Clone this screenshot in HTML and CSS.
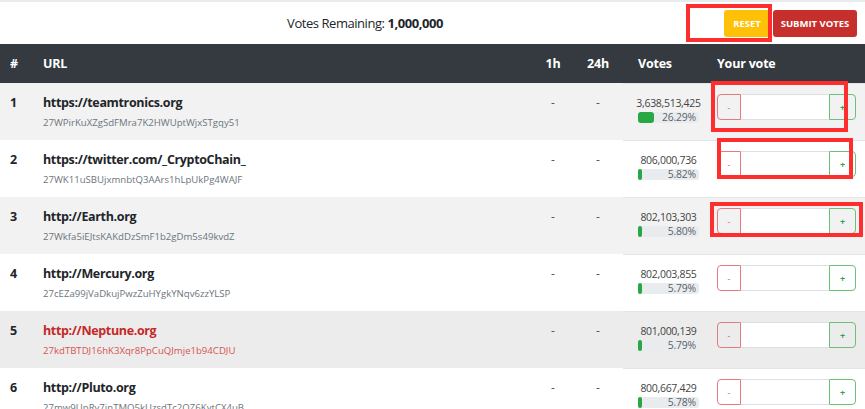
FILE: index.html
```html
<!DOCTYPE html>
<html>
<head>
<meta charset="utf-8">
<link rel="stylesheet" href="styles.css">
</head>
<body>
<div class="page">
  <div class="topline"></div>
  <div class="toolbar">
    <div class="remaining">Votes Remaining: <b>1,000,000</b></div>
    <div class="actions">
      <button class="btn btn-reset">RESET</button>
      <button class="btn btn-submit">SUBMIT VOTES</button>
    </div>
  </div>
  <div class="thead">
    <div class="c-num">#</div>
    <div class="c-url">URL</div>
    <div class="c-h">1h</div>
    <div class="c-d">24h</div>
    <div class="c-votes">Votes</div>
    <div class="c-yours">Your vote</div>
  </div>

  <div class="row alt">
    <div class="c-num">1</div>
    <div class="c-url"><div class="url">https://teamtronics.org</div><div class="addr">27WPirKuXZgSdFMra7K2HWUptWjxSTgqy51</div></div>
    <div class="c-h">-</div>
    <div class="c-d">-</div>
    <div class="c-votes sep"><div class="vnum">3,638,513,425</div><div class="bar"><div class="fill" style="width:26.29%"></div><span>26.29%</span></div></div>
    <div class="c-yours sep"><div class="vgroup"><span class="minus">-</span><span class="vinput"></span><span class="plus">+</span></div></div>
  </div>

  <div class="row">
    <div class="c-num">2</div>
    <div class="c-url"><div class="url">https://twitter.com/_CryptoChain_</div><div class="addr">27WK11uSBUjxmnbtQ3AArs1hLpUkPg4WAJF</div></div>
    <div class="c-h">-</div>
    <div class="c-d">-</div>
    <div class="c-votes sep"><div class="vnum">806,000,736</div><div class="bar"><div class="fill" style="width:5.82%"></div><span>5.82%</span></div></div>
    <div class="c-yours sep"><div class="vgroup"><span class="minus">-</span><span class="vinput"></span><span class="plus">+</span></div></div>
  </div>

  <div class="row alt">
    <div class="c-num">3</div>
    <div class="c-url"><div class="url">http://Earth.org</div><div class="addr">27Wkfa5iEJtsKAKdDzSmF1b2gDm5s49kvdZ</div></div>
    <div class="c-h">-</div>
    <div class="c-d">-</div>
    <div class="c-votes sep"><div class="vnum">802,103,303</div><div class="bar"><div class="fill" style="width:5.80%"></div><span>5.80%</span></div></div>
    <div class="c-yours sep"><div class="vgroup"><span class="minus">-</span><span class="vinput"></span><span class="plus">+</span></div></div>
  </div>

  <div class="row">
    <div class="c-num">4</div>
    <div class="c-url"><div class="url">http://Mercury.org</div><div class="addr">27cEZa99jVaDkujPwzZuHYgkYNqv6zzYLSP</div></div>
    <div class="c-h">-</div>
    <div class="c-d">-</div>
    <div class="c-votes sep"><div class="vnum">802,003,855</div><div class="bar"><div class="fill" style="width:5.79%"></div><span>5.79%</span></div></div>
    <div class="c-yours sep"><div class="vgroup"><span class="minus">-</span><span class="vinput"></span><span class="plus">+</span></div></div>
  </div>

  <div class="row hover">
    <div class="c-num">5</div>
    <div class="c-url"><div class="url">http://Neptune.org</div><div class="addr">27kdTBTDJ16hK3Xqr8PpCuQJmje1b94CDJU</div></div>
    <div class="c-h">-</div>
    <div class="c-d">-</div>
    <div class="c-votes sep"><div class="vnum">801,000,139</div><div class="bar"><div class="fill" style="width:5.79%"></div><span>5.79%</span></div></div>
    <div class="c-yours sep"><div class="vgroup"><span class="minus">-</span><span class="vinput"></span><span class="plus">+</span></div></div>
  </div>

  <div class="row">
    <div class="c-num">6</div>
    <div class="c-url"><div class="url">http://Pluto.org</div><div class="addr">27mw9UpRy7jnTMQ5kUzsdTc2QZ6KytCX4uB</div></div>
    <div class="c-h">-</div>
    <div class="c-d">-</div>
    <div class="c-votes sep"><div class="vnum">800,667,429</div><div class="bar"><div class="fill" style="width:5.78%"></div><span>5.78%</span></div></div>
    <div class="c-yours sep"><div class="vgroup"><span class="minus">-</span><span class="vinput"></span><span class="plus">+</span></div></div>
  </div>

  <div class="mark mark-0"></div>
  <div class="mark mark-1"></div>
  <div class="mark mark-2"></div>
  <div class="mark mark-3"></div>
</div>
</body>
</html>
```

FILE: styles.css
```css
html, body {
  margin: 0;
  padding: 0;
  background: #fff;
}
body {
  font-family: "Open Sans", "Noto Sans", sans-serif;
  color: #212529;
  overflow: hidden;
}
.page {
  position: relative;
  width: 865px;
  height: 409px;
  overflow: hidden;
}
.topline {
  height: 2px;
  background: #e9ecef;
}
.toolbar {
  height: 42px;
  display: flex;
  align-items: center;
}
.remaining {
  flex: 1;
  text-align: center;
  font-size: 13px;
  letter-spacing: -0.45px;
  color: #212529;
  padding-left: 6px;
}
.remaining b { font-weight: 700; }
.actions {
  display: flex;
  gap: 3px;
  padding-right: 8px;
  padding-top: 1px;
}
.btn {
  border: none;
  border-radius: 3px;
  color: #fff;
  font-family: inherit;
  font-weight: 700;
  font-size: 9.5px;
  height: 27px;
  padding: 0;
}
.btn-reset {
  background: #ffc107;
  width: 46px;
}
.btn-submit {
  background: #c62f2b;
  width: 84px;
}

.thead, .row {
  display: grid;
  grid-template-columns: 43px 1fr 40px 50px 94px 148px;
}
.thead {
  background: #343a40;
  color: #fff;
  font-weight: 700;
  font-size: 12.5px;
  letter-spacing: -0.2px;
  height: 39px;
  align-items: center;
}
.thead .c-h, .thead .c-d { text-align: center; }
.c-num { padding-left: 10px; }
.c-votes { padding-left: 15px; }
.c-yours { padding-right: 9px; }

.row {
  height: 57px;
  box-sizing: border-box;
  background: #fff;
}
.row.alt { background: #f2f2f2; }
.row.hover { background: #ececec; }
.row > div {
  padding-top: 11px;
  box-sizing: border-box;
}
.row .c-num {
  font-weight: 700;
  font-size: 12.5px;
  line-height: 18px;
}
.url {
  font-weight: 700;
  font-size: 12.5px;
  letter-spacing: -0.35px;
  line-height: 18px;
  color: #212529;
}
.addr {
  font-size: 9.6px;
  line-height: 14px;
  margin-top: 4px;
  color: #6c757d;
}
.row.hover .url { color: #c62828; }
.row.hover .addr { color: #d9534f; }
.row .c-h, .row .c-d {
  text-align: center;
  font-size: 12px;
  line-height: 18px;
  color: #555;
}
.sep { border-top: 1px solid #e4e4e4; }
.row .sep { padding-top: 10px; }
.vnum {
  width: 71px;
  margin-left: -5px;
  text-align: center;
  white-space: nowrap;
  font-size: 10.5px;
  letter-spacing: -0.3px;
  line-height: 18px;
  color: #444;
}
.bar {
  position: relative;
  width: 61px;
  height: 11px;
  background: #e9ecef;
  border-radius: 3px;
}
.fill {
  height: 100%;
  min-width: 3px;
  background: #28a745;
  border-radius: 3px;
}
.bar span {
  position: absolute;
  right: 3px;
  top: -2px;
  font-size: 10.4px;
  line-height: 14px;
  letter-spacing: -0.2px;
  white-space: nowrap;
  color: #5a6268;
}
.vgroup {
  display: flex;
  height: 26px;
}
.minus, .plus {
  width: 24px;
  box-sizing: border-box;
  display: flex;
  align-items: center;
  justify-content: center;
  font-size: 9px;
}
.minus {
  border: 1px solid #e57b7f;
  border-radius: 4px 0 0 4px;
  color: #e35d61;
}
.plus {
  width: 27px;
  border: 1px solid #6cc07a;
  border-radius: 0 4px 4px 0;
  color: #28a745;
  font-weight: 700;
}
.vinput {
  flex: 1;
  background: #fff;
  border-top: 1px solid #dcdfe3;
  border-bottom: 1px solid #dcdfe3;
  box-sizing: border-box;
}

.mark {
  position: absolute;
  border: 4px solid #ff2e2e;
  box-sizing: border-box;
}
.mark-0 { left: 686px; top: 4px; width: 86px; height: 38px; }
.mark-1 { left: 711px; top: 81px; width: 137px; height: 51px; }
.mark-2 { left: 717px; top: 138px; width: 136px; height: 41px; }
.mark-3 { left: 710px; top: 202px; width: 153px; height: 35px; }
```
